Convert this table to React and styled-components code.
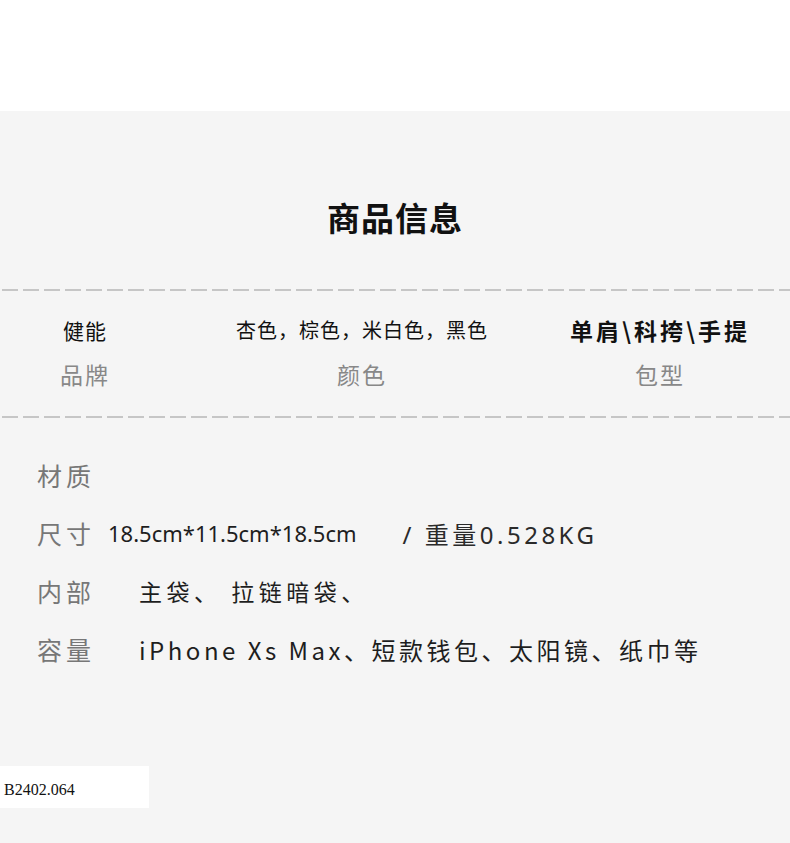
import styled, { createGlobalStyle } from "styled-components"

const Global = createGlobalStyle`
html, body {
  margin: 0;
  padding: 0;
  background: #ffffff;
}
body {
  font-family: "Noto Sans", "Noto Sans CJK SC", sans-serif;
}
`

const info = [
  { value: "健能", label: "品牌", size: 21, weight: 400, ls: 1 },
  { value: "杏色，棕色，米白色，黑色", label: "颜色", size: 20, weight: 400, ls: 1 },
  { value: "单肩\\科挎\\手提", label: "包型", size: 23, weight: 700, ls: 3 },
]

const TopBand = styled.div`
height: 111px;
background: #ffffff;
`

const Panel = styled.section`
background: #f5f5f5;
box-sizing: border-box;
height: 732px;
overflow: hidden;
padding-top: 86px;
display: flex;
flex-direction: column;
`

const Title = styled.h1`
margin: 0;
height: 40px;
line-height: 40px;
text-align: center;
font-family: "Noto Sans CJK SC", sans-serif;
font-size: 33px;
font-weight: 700;
color: #111;
letter-spacing: 1px;
`

const Dashes = styled.div`
height: 2px;
flex-shrink: 0;
margin-top: ${(p) => p.$top}px;
background: repeating-linear-gradient(
  to right,
  transparent 0px,
  transparent 2px,
  #c6c6c6 2px,
  #c6c6c6 18px,
  transparent 18px,
  transparent 21px
);
`

const InfoRow = styled.div`
display: grid;
grid-template-columns: 170px 384px 212px;
padding-top: 24px;
box-sizing: border-box;
height: 125px;
`

const InfoCell = styled.div`
display: flex;
flex-direction: column;
align-items: center;
gap: 14px;
font-family: "Noto Sans CJK SC", sans-serif;
`

const InfoValue = styled.div`
height: 30px;
line-height: 30px;
font-size: ${(p) => p.$size}px;
font-weight: ${(p) => p.$weight};
color: #111;
letter-spacing: ${(p) => p.$ls}px;
white-space: nowrap;
`

const InfoLabel = styled.div`
height: 30px;
line-height: 30px;
font-size: 23px;
color: #888;
letter-spacing: 2px;
`

const Specs = styled.div`
display: flex;
flex-direction: column;
gap: 28px;
padding: 42px 0 0 37px;
`

const SpecRow = styled.div`
display: flex;
align-items: center;
height: 30px;
font-family: "Noto Sans CJK SC", sans-serif;
`

const SpecLabel = styled.span`
width: ${(p) => p.$w || 102}px;
flex-shrink: 0;
font-size: 25px;
color: #777;
letter-spacing: 4px;
white-space: nowrap;
`

const SpecValue = styled.span`
font-family: ${(p) => (p.$latin ? '"Noto Sans", "Noto Sans CJK SC", sans-serif' : '"Noto Sans CJK SC", sans-serif')};
font-size: ${(p) => p.$size || 23}px;
letter-spacing: ${(p) => p.$ls ?? 3}px;
color: #1e1e1e;
white-space: nowrap;
`

const Weight = styled.span`
margin-left: 46px;
font-family: "Noto Sans", "Noto Sans CJK SC", sans-serif;
font-size: 24px;
letter-spacing: 3.5px;
color: #2a2a2a;
`

const Tag = styled.div`
margin-top: 102px;
width: 149px;
height: 42px;
flex-shrink: 0;
background: #ffffff;
display: flex;
align-items: center;
padding: 6px 0 0 4px;
box-sizing: border-box;
font-family: "Liberation Serif", serif;
font-size: 16px;
color: #111;
`

export default function App() {
  return (
    <>
      <Global />
      <TopBand />
      <Panel>
        <Title>商品信息</Title>
        <Dashes $top={52} />
        <InfoRow>
          {info.map((item, index) => (
            <InfoCell key={index}>
              <InfoValue $size={item.size} $weight={item.weight} $ls={item.ls}>{item.value}</InfoValue>
              <InfoLabel>{item.label}</InfoLabel>
            </InfoCell>
          ))}
        </InfoRow>
        <Dashes $top={0} />
        <Specs>
          <SpecRow>
            <SpecLabel>材质</SpecLabel>
          </SpecRow>
          <SpecRow>
            <SpecLabel $w={71}>尺寸</SpecLabel>
            <SpecValue $latin $size={22} $ls={0}>18.5cm*11.5cm*18.5cm</SpecValue>
            <Weight>/ 重量0.528KG</Weight>
          </SpecRow>
          <SpecRow>
            <SpecLabel>内部</SpecLabel>
            <SpecValue $ls={4.5}>主袋、 拉链暗袋、</SpecValue>
          </SpecRow>
          <SpecRow>
            <SpecLabel>容量</SpecLabel>
            <SpecValue $size={24} $ls={3.5}>iPhone Xs Max、短款钱包、太阳镜、纸巾等</SpecValue>
          </SpecRow>
        </Specs>
        <Tag>B2402.064</Tag>
      </Panel>
    </>
  )
}
